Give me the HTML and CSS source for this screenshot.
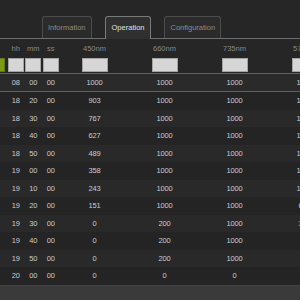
FILE: index.html
```html
<!DOCTYPE html>
<html>
	<head>
		<title>Schedule</title>
		<meta name="viewport" content="width=device-width" />
		<link rel="stylesheet" href="styles.css">
	</head>
	<body>

		<div class="tabs">
			<div class="tab">Information</div>
			<div class="tab active">Operation</div>
			<div class="tab">Configuration</div>
		</div>

		<div class="grid">
			<div class="row head">
				<span></span><span>hh</span><span>mm</span><span>ss</span>
				<span>450nm</span><span>660nm</span><span>735nm</span><span>570nm</span>
			</div>

			<div class="row filters">
				<span><i class="mark"></i></span>
				<span><i class="box small"></i></span>
				<span><i class="box small"></i></span>
				<span><i class="box small"></i></span>
				<span><i class="box"></i></span>
				<span><i class="box"></i></span>
				<span><i class="box"></i></span>
				<span><i class="box"></i></span>
			</div>

			<div class="row data first">
				<span></span><span>08</span><span>00</span><span>00</span>
				<span>1000</span><span>1000</span><span>1000</span><span>1000</span>
			</div>

			<div class="row data">
				<span></span><span>18</span><span>20</span><span>00</span>
				<span>903</span><span>1000</span><span>1000</span><span>1000</span>
			</div>
			<div class="row data">
				<span></span><span>18</span><span>30</span><span>00</span>
				<span>767</span><span>1000</span><span>1000</span><span>1000</span>
			</div>
			<div class="row data">
				<span></span><span>18</span><span>40</span><span>00</span>
				<span>627</span><span>1000</span><span>1000</span><span>1000</span>
			</div>
			<div class="row data">
				<span></span><span>18</span><span>50</span><span>00</span>
				<span>489</span><span>1000</span><span>1000</span><span>1000</span>
			</div>
			<div class="row data">
				<span></span><span>19</span><span>00</span><span>00</span>
				<span>358</span><span>1000</span><span>1000</span><span>1000</span>
			</div>
			<div class="row data">
				<span></span><span>19</span><span>10</span><span>00</span>
				<span>243</span><span>1000</span><span>1000</span><span>1000</span>
			</div>
			<div class="row data">
				<span></span><span>19</span><span>20</span><span>00</span>
				<span>151</span><span>1000</span><span>1000</span><span>640</span>
			</div>
			<div class="row data">
				<span></span><span>19</span><span>30</span><span>00</span>
				<span>0</span><span>200</span><span>1000</span><span>320</span>
			</div>
			<div class="row data">
				<span></span><span>19</span><span>40</span><span>00</span>
				<span>0</span><span>200</span><span>1000</span><span></span>
			</div>
			<div class="row data">
				<span></span><span>19</span><span>50</span><span>00</span>
				<span>0</span><span>200</span><span>1000</span><span></span>
			</div>
			<div class="row data">
				<span></span><span>20</span><span>00</span><span>00</span>
				<span>0</span><span>0</span><span>0</span><span></span>
			</div>
		</div>

		<div class="footer"></div>

	</body>
</html>
```

FILE: styles.css
```css
* {
	margin: 0;
	padding: 0;
	box-sizing: border-box;
}

html, body {
	background: #262626;
	height: 100%;
	overflow: hidden;
	font-family: "Liberation Sans", Arial, sans-serif;
	font-size: 7.5px;
}

body {
	display: flex;
	flex-direction: column;
	width: 300px;
}

.tabs {
	display: flex;
	gap: 13px;
	height: 39px;
	padding: 16px 0 0 42px;
	border-bottom: 1px solid #6e6e6e;
}

.tab {
	height: 22px;
	padding: 0 5px;
	line-height: 21px;
	color: #8c8c8c;
	background: #2b2b2b;
	border: 1px solid #4c4c4c;
	border-bottom: none;
	border-radius: 3px 3px 0 0;
}

.tab.active {
	color: #e0e0e0;
	background: #303030;
	border-color: #7a7a7a;
	height: 23px;
	margin-bottom: -1px;
	padding: 0 6px;
}

.grid {
	width: 400px;
}

.row {
	display: grid;
	grid-template-columns: 7px 17.5px 17.5px 17.5px 70px 70px 70px 70px;
	align-items: center;
	text-align: center;
}

.row.head {
	height: 18px;
	color: #888;
}

.row.filters {
	height: 17px;
	border-bottom: 1px solid #1f8a2e;
	padding-bottom: 1px;
}

.row.filters span {
	display: flex;
	justify-content: center;
}

.box {
	display: block;
	width: 26px;
	height: 14px;
	background: #d6d6d6;
	border: 1px solid #a4a4a4;
}

.box.small {
	width: 16px;
}

.mark {
	display: block;
	width: 5px;
	height: 14px;
	margin-right: 2px;
	background: #7c9c16;
	border: 1px solid #5f7a10;
	border-left: none;
}

.row.data {
	height: 17.5px;
	color: #c8ccd2;
	letter-spacing: -0.2px;
	background: #292929;
}

.row.data:nth-child(even) {
	background: #242424;
}

.row.data.first {
	height: 18px;
	background: #2a2a2a;
	border-bottom: 1px solid #1f8a2e;
}

.footer {
	flex: 1;
	background: #3a3a3a;
	border-top: 1px solid #444;
}
```
